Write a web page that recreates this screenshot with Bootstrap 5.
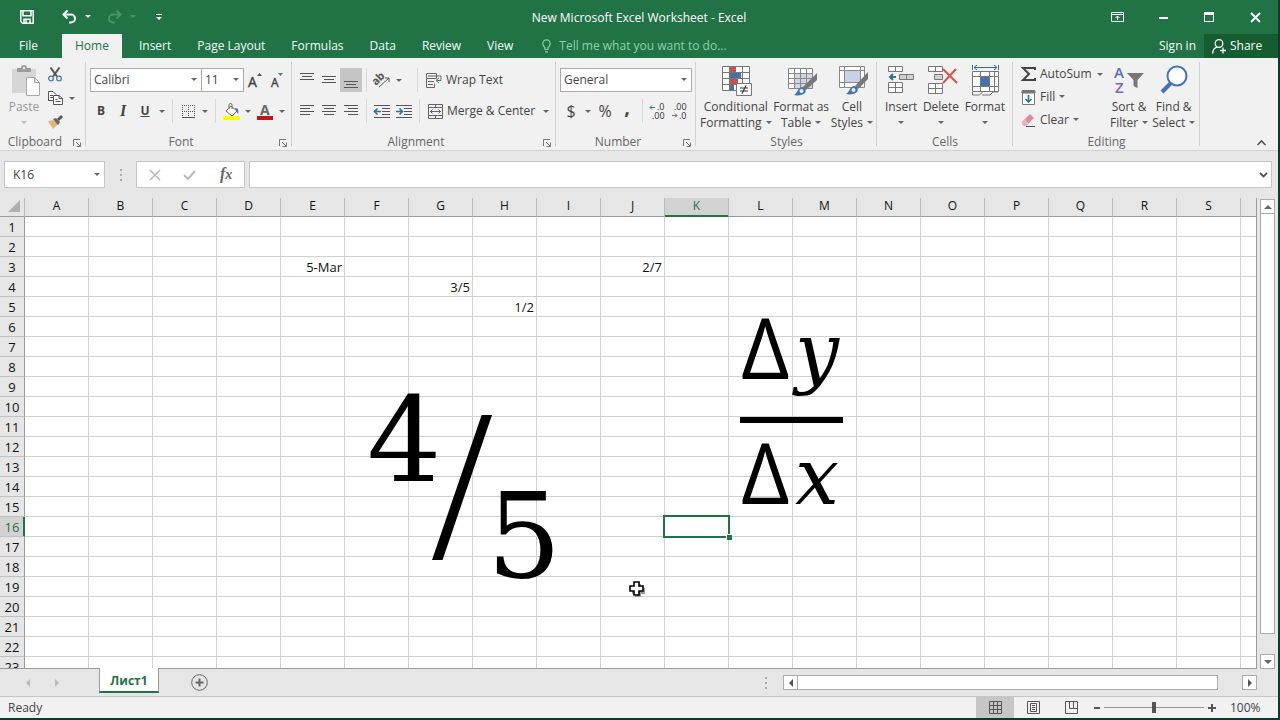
<!DOCTYPE html>
<html lang="en">
<head>
<meta charset="utf-8">
<meta name="viewport" content="width=device-width, initial-scale=1">
<title>New Microsoft Excel Worksheet - Excel</title>
<link href="https://cdn.jsdelivr.net/npm/bootstrap@5.3.0/dist/css/bootstrap.min.css" rel="stylesheet">
<style>
:root{--green:#217346;--line:#d0d0d0;--ink:#444}
body{font:12px/16px "Open Sans","Noto Sans",sans-serif;color:var(--ink);background:#e6e6e6;border-right:2px solid #0b3b2e;border-bottom:2px solid #0b3b2e}
svg{display:block;flex:none;overflow:visible}
button{border:0;background:none;padding:0;color:inherit;line-height:16px}
/* title bar */
.titlebar{background:var(--green);color:#fff;height:34px}
.titlebar h1{font-size:12px;line-height:16px;padding-top:2px}
.titlebar .side{flex:1 1 0}
.winbtn{width:46px;height:32px;display:grid;place-items:center}
/* tabs */
.tabs{background:var(--green);height:24px}
.tabs a{color:#f0fff6;text-decoration:none;padding:0 13px;line-height:23px;display:block}
.tabs a.active{background:#f1f1f1;color:var(--green)}
.tabs a.filetab{padding:0 24px 0 19px}
.tell{background:none;border:0;color:#8fd0ab;padding:0;width:180px;outline:0}
.tell::placeholder{color:#8fd0ab;opacity:1}
.share{background:#155c31;color:#fff;width:74px}
/* ribbon */
.ribbon{background:#f1f1f1;border-bottom:1px solid #d2d2d2;padding-top:4px;display:grid;grid-template-columns:86px 206px 264px 140px 181px 136px 187px 1fr}
.grp{display:grid;grid-template-rows:70px 18px;background:linear-gradient(var(--line),var(--line)) no-repeat right top/1px 84px}
.grp:last-child{background:none}
.glabel{position:relative;text-align:center;line-height:20px;color:#666}
.launch{position:absolute;right:5px;top:7px}
.two{display:grid;grid-template-rows:24px 24px;row-gap:7px;padding:6px 0 0 4px}
.tb{width:22px;height:24px;display:grid;place-items:center;flex:none}
.tb.on{background:#c5c5c5}
.dd{width:12px;height:24px;display:grid;place-items:center;flex:none}
.dd::after,.arr::after{content:"";border:3px solid transparent;border-top-color:#666;border-bottom:0}
.arr::after{display:inline-block;margin-left:4px;vertical-align:3px}
.arr.solo::after{margin-left:0}
.off .arr::after{border-top-color:#bbb}
.vsep{width:1px;height:24px;margin:0 4px;background:#d8d8d8;flex:none}
.box{border:1px solid #ababab;border-radius:0;background:#fff;color:var(--ink);height:24px;padding:0 4px 0 3px;font-size:12px;line-height:16px;appearance:none;background-image:url("data:image/svg+xml,%3Csvg xmlns='http://www.w3.org/2000/svg' width='6' height='4'%3E%3Cpath d='M0 0h6L3 3z' fill='%23666'/%3E%3C/svg%3E");background-repeat:no-repeat;background-position:right 4px center;background-size:6px 4px}
.fontbox{width:112px}
.sizebox{width:42px}
.big{display:flex;flex-direction:column;align-items:center;padding-top:3px;justify-content:flex-start;white-space:nowrap}
.big svg{margin-bottom:2px}
.off{color:#999}
.edit{width:93px}
.serif{font-family:"Liberation Serif",serif;font-style:italic;font-weight:700}
/* formula bar */
.fbar{padding:10px 6px 10px 4px;height:47px;gap:4px}
.fbox{height:27px;border:1px solid #c6c6c6;background-color:#fff}
.namebox{width:101px}
.grip{width:23px}
.fxbox{width:109px}
.fxbox .serif{font-size:16px;color:#666}
.finput{outline:0;border:0}
/* sheet */
.work{min-height:0}
.sheet{min-width:0;background:#fff;overflow:hidden;border-right:1px solid #9a9a9a;border-bottom:1px solid #9a9a9a;position:relative;color:#111}
.sheet table{table-layout:fixed;border-collapse:separate;border-spacing:0;width:1305px;font-size:13px;line-height:17px}
.sheet th,.sheet td{height:20px;padding:2px 2px 0 0;border-right:1px solid #d0d0d0;border-bottom:1px solid #d0d0d0;font-weight:400;text-align:right}
.sheet thead th{height:19px;line-height:16px;padding:0 0 2px;background:#e6e6e6;border-right-color:#bbb;border-bottom-color:#9a9a9a;text-align:center;font-size:12px}
.sheet tbody th{background:#e6e6e6;border-right-color:#9a9a9a;border-bottom-color:#c0c0c0;text-align:center;padding:2px 0 0}
.sheet thead th:first-child{border-right-color:#bbb}
.sheet thead th.sel{background:#d2d2d2;color:var(--green);border-bottom-color:var(--green);box-shadow:inset 0 -1px var(--green)}
.sheet tbody th.sel{background:#d2d2d2;color:var(--green);border-right-color:var(--green);box-shadow:inset -1px 0 var(--green)}
td.cur{position:relative}
td.cur::before{content:"";position:absolute;inset:-2px;border:2px solid var(--green)}
td.cur::after{content:"";position:absolute;right:-4px;bottom:-4px;width:6px;height:6px;background:var(--green);border:solid #fff;border-width:1px 0 0 1px}
.eq{position:absolute;color:#000;white-space:nowrap}
.num{font-family:"DejaVu Serif",serif;font-size:117px;line-height:118px}
.four{left:367px;top:184px}
.five{left:487px;top:280px}
.slash{left:432px;top:182px;font-family:"Liberation Serif",serif;font-size:216px;line-height:212px}
.frac{left:740px;top:84px;width:103px;font-size:84px}
.frac div{display:flex;justify-content:space-between;align-items:baseline;padding:0 4px 0 1px}
.frac .top{line-height:130px}
.frac .bot{line-height:98px}
.frac span{font-family:"Open Sans",sans-serif}
.frac i{font-family:"DejaVu Serif",serif;font-size:78px}
.frac hr{height:6px;margin:0;border:0;background:#000;opacity:1}
.pointer{left:629px;top:383px}
.vbar{width:21px;padding:1px 3px 0 3px}
.gap20{height:20px}
.sb{background:#fff;border:1px solid #ababab;width:15px;height:15px;display:grid;place-items:center;flex:none}
/* bottom */
.shtabs{height:28px;border-bottom:1px solid #c6c6c6}
.shtab{background:#fff;color:var(--green);font-weight:700;width:60px;height:25px;margin-top:-1px;border:solid #9a9a9a;border-width:0 1px;border-bottom:2px solid var(--green);position:relative;text-decoration:none;text-align:center;line-height:26px}
.status{background:#f1f1f1;height:21px}
.vw{width:38px;height:21px;display:grid;place-items:center}
.vw.on{background:#c6c6c6}
.zoomr{appearance:none;width:100px;height:12px;background:linear-gradient(#999,#999) center/100% 1px no-repeat;margin:0 4px}
.zoomr::-webkit-slider-thumb{appearance:none;width:4px;height:11px;background:#555}
.zval{width:62px;padding-left:14px}
.hbar{padding-right:21px}
.hthumb{width:420px}
</style>
</head>
<body class="d-flex flex-column vh-100 overflow-hidden">

<header>
<div class="titlebar d-flex align-items-center">
  <div class="side d-flex align-items-center">
    <button class="ms-3 me-4" aria-label="Save"><svg class="ms-1" width="14" height="14" viewBox="0 0 14 14" fill="none" stroke="#fff" stroke-width="1.5"><path d="M.8.8h12.4v12.4H2.5L.8 11.5zM3 .8v5h8v-5M4 13V9.2h6V13M6 10v3"/></svg></button>
    <button class="ms-1" aria-label="Undo"><svg width="15" height="14" viewBox="0 0 15 14" fill="none" stroke="#fff" stroke-width="2"><path d="M1.5 4.5H9a4 4 0 0 1 0 8H7"/><path d="M5.5.5l-4 4 4 4"/></svg></button>
    <button class="ms-2" aria-label="Undo list"><svg width="6" height="4"><path d="M0 0h6L3 3z" fill="#fff"/></svg></button>
    <button class="ms-3" aria-label="Redo"><svg width="15" height="14" viewBox="0 0 15 14" fill="none" stroke="#4d9169" stroke-width="2"><path d="M13.500 4.500H6a4 4 0 0 0 0 8h2"/><path d="M9.500.5l4 4-4 4"/></svg></button>
    <button class="ms-2" aria-label="Redo list"><svg width="6" height="4"><path d="M0 0h6L3 3z" fill="#4d9169"/></svg></button>
    <button class="ms-3 ps-1" aria-label="Customize toolbar"><svg width="6" height="7"><path d="M0 0h6v1H0zM0 3h6L3 6z" fill="#fff"/></svg></button>
  </div>
  <h1 class="m-0 fw-normal">New Microsoft Excel Worksheet - Excel</h1>
  <div class="side d-flex justify-content-end">
    <button class="winbtn" aria-label="Ribbon options"><svg width="13" height="10" viewBox="0 0 13 10" fill="none" stroke="#fff"><path d="M.5.5h12v9H.5zM.5 2.500h12M6.500 8V4M4.500 6l2-2 2 2"/></svg></button>
    <button class="winbtn" aria-label="Minimize"><svg width="9" height="10"><path d="M0 5h9v2H0z" fill="#fff"/></svg></button>
    <button class="winbtn" aria-label="Maximize"><svg width="10" height="10"><path d="M0 0h10v10H0zM1 3v6h8V3z" fill="#fff" fill-rule="evenodd"/></svg></button>
    <button class="winbtn" aria-label="Close"><svg width="9" height="9" stroke="#fff" stroke-width="2"><path d="M0 0l9 9M9 0L0 9"/></svg></button>
  </div>
</div>
<nav class="tabs d-flex">
  <a href="#" class="filetab">File</a>
  <a href="#" class="active me-1">Home</a>
  <a href="#">Insert</a><a href="#">Page Layout</a><a href="#">Formulas</a><a href="#">Data</a><a href="#">Review</a><a href="#">View</a>
  <label class="d-flex align-items-center ms-3 gap-2"><svg width="9" height="14" viewBox="0 0 9 14" fill="none" stroke="#8fd0ab" stroke-width="1.200"><path d="M3 10.500V8.500C1.500 7.500.8 6 .8 4.500a3.700 3.700 0 0 1 7.400 0C8.200 6 7.500 7.500 6 8.500v2zM3 12.800h3"/></svg><input class="tell" placeholder="Tell me what you want to do..." aria-label="Tell me what you want to do"></label>
  <a href="#" class="ms-auto ps-2 pe-2">Sign in</a>
  <button class="share d-flex align-items-center ps-2 gap-1"><svg width="14" height="15" viewBox="0 0 14 15" fill="none" stroke="#fff" stroke-width="1.300"><circle cx="7" cy="4.500" r="3.800"/><path d="M.7 14.500c0-3 1.500-5.500 4.300-6.300M11 8.500v6M8 11.500h6"/></svg>Share</button>
</nav>

<div class="ribbon">
  <section class="grp">
    <div class="d-flex">
      <button class="big off ms-2">
        <svg width="32" height="32" viewBox="0 0 32 32"><path d="M4 4h24v24H4z" fill="#d6d6d6"/><path d="M9 3h4a3 3 0 0 1 6 0h4v4H9z" fill="#9b9b9b"/><circle cx="16" cy="3" r="1.200" fill="#f1f1f1"/><path d="M18.500 12.500h8l5 5v13h-13zM26.500 12.500v5h5" fill="#fff" stroke="#aaa"/></svg>
        <span>Paste</span><span class="arr solo"></span></button>
      <div class="ms-1">
        <button class="tb" aria-label="Cut"><svg width="14" height="15" viewBox="0 0 14 15" fill="none"><path d="M2.500.5l6.500 9M11.500.5L5 9.500" stroke="#555" stroke-width="2"/><circle cx="3" cy="11.500" r="2.300" stroke="#4a78b5" stroke-width="1.300"/><circle cx="11" cy="11.500" r="2.300" stroke="#4a78b5" stroke-width="1.300"/></svg></button>
        <div class="d-flex"><button class="tb" aria-label="Copy"><svg width="15" height="14" viewBox="0 0 15 14" fill="#fff" stroke="#555"><path d="M.5.5H5l3 3v6H.5zM2 4.500h3M2 6.500h3"/><path d="M5.500 4.500H11l3.500 3v6h-9zM11 4.500v3h3.500M7.500 8.500h2M7.500 10.500h5"/></svg></button><button class="dd" aria-label="Copy options"></button></div>
        <button class="tb" aria-label="Format painter"><svg width="16" height="14" viewBox="0 0 16 14"><path d="M1 6l6-1 4 4-5 5z" fill="#e5b476"/><path d="M6 4l3-1 4 4-2 3z" fill="#666"/><path d="M10 4l4-4 2 2-4 4z" fill="#555"/></svg></button>
      </div>
    </div>
    <div class="glabel pe-3">Clipboard<svg class="launch" width="8" height="8" fill="none" stroke="#777"><path d="M.5 7V.5H7M3 3l4 4M7.500 3.500v4h-4"/></svg></div>
  </section>

  <section class="grp">
    <div class="two ps-0">
      <div class="d-flex">
        <select class="box fontbox ms-1" aria-label="Font"><option>Calibri</option></select>
        <select class="box sizebox border-start-0" aria-label="Font size"><option>11</option></select>
        <button class="tb" aria-label="Grow font"><svg width="14" height="15"><text x="0" y="14" font-size="14" stroke="#444" stroke-width=".4" fill="#444">A</text><path d="M9 3l2.500-3L14 3z" fill="#555"/></svg></button>
        <button class="tb" aria-label="Shrink font"><svg width="12" height="15"><text x="0" y="14" font-size="12" stroke="#444" stroke-width=".4" fill="#444">A</text><path d="M7 0h5l-2.500 3z" fill="#4a78b5"/></svg></button>
      </div>
      <div class="d-flex">
        <button class="tb fw-bold ms-1">B</button><button class="tb serif fs-6">I</button><button class="tb fw-bold"><u>U</u></button><button class="dd" aria-label="Underline options"></button>
        <span class="vsep"></span>
        <button class="tb" aria-label="Borders"><svg width="13" height="13" fill="none" stroke="#555"><path d="M.5 0v12M6.500 0v12M12.500 0v12M0 .5h13M0 6.500h13" stroke-dasharray="1 1"/><path d="M0 12.500h13"/></svg></button><button class="dd" aria-label="Border options"></button>
        <span class="vsep"></span>
        <button class="tb" aria-label="Fill color"><svg width="17" height="17" viewBox="0 0 17 17"><path d="M0 13h17v4H0z" fill="#ff0"/><path d="M8 3l6 5-5 5-6-5z" fill="#fff" stroke="#666"/><path d="M6 6V2a1.500 1.500 0 0 1 3 0v4" fill="none" stroke="#666"/><path d="M12 5c3 0 4 2 3 6l-2-3z" fill="#4a78b5"/></svg></button><button class="dd" aria-label="Fill options"></button>
        <button class="tb" aria-label="Font color"><svg width="16" height="17"><text x="3" y="12" font-size="14" font-weight="700" fill="#666">A</text><path d="M0 13h16v4H0z" fill="#c5161c"/></svg></button><button class="dd" aria-label="Font color options"></button>
      </div>
    </div>
    <div class="glabel pe-3">Font<svg class="launch" width="8" height="8" fill="none" stroke="#777"><path d="M.5 7V.5H7M3 3l4 4M7.500 3.500v4h-4"/></svg></div>
  </section>

  <section class="grp">
    <div class="two">
      <div class="d-flex">
        <button class="tb" aria-label="Top align"><svg width="14" height="16" stroke="#555"><path d="M0 1.500h14M2 4.500h10M0 7.500h14"/></svg></button>
        <button class="tb" aria-label="Middle align"><svg width="14" height="16" stroke="#555"><path d="M0 4.500h14M2 7.500h10M0 10.500h14"/></svg></button>
        <button class="tb on" aria-label="Bottom align"><svg width="14" height="16" stroke="#555"><path d="M0 9.500h14M2 12.500h10M0 15.500h14"/></svg></button>
        <span class="vsep"></span>
        <button class="tb" aria-label="Orientation"><svg width="16" height="15" viewBox="0 0 16 15"><text x="0" y="0" font-size="11" font-weight="700" fill="#555" transform="translate(4 11) rotate(-45) translate(-3 0)">ab</text><path d="M5 14L15 5M15 9V5h-4" fill="none" stroke="#555"/></svg></button><button class="dd me-2" aria-label="Orientation options"></button><span class="vsep ms-1"></span>
        <button class="d-flex align-items-center gap-1 ps-1"><svg width="16" height="15" viewBox="0 0 16 15" fill="none" stroke="#666"><path d="M.5.5h10v5H.5zM.5 5.500v9h8v-4M2 3h13M2 8.500h6M2 11.500h5M15 3v4.500h-4.500"/><path d="M13 5l-3 2.500 3 2.500" stroke="#4a78b5"/></svg>Wrap Text</button>
      </div>
      <div class="d-flex">
        <button class="tb" aria-label="Align left"><svg width="14" height="12" stroke="#555"><path d="M0 .5h14M0 3.500h10M0 6.500h14M0 9.500h10"/></svg></button>
        <button class="tb" aria-label="Center"><svg width="14" height="12" stroke="#555"><path d="M0 .5h14M2 3.500h10M0 6.500h14M2 9.500h10"/></svg></button>
        <button class="tb" aria-label="Align right"><svg width="14" height="12" stroke="#555"><path d="M0 .5h14M4 3.500h10M0 6.500h14M4 9.500h10"/></svg></button>
        <span class="vsep"></span>
        <button class="tb" aria-label="Decrease indent"><svg width="16" height="13" stroke="#555" fill="none"><path d="M0 .5h16M8 3.500h8M8 6.500h8M8 9.500h8M0 12.500h16"/><path d="M7 6.500H1M3.500 3.500l-3 3 3 3" stroke="#31719c" stroke-width="1.600"/></svg></button>
        <button class="tb" aria-label="Increase indent"><svg width="16" height="13" stroke="#555" fill="none"><path d="M0 .5h16M8 3.500h8M8 6.500h8M8 9.500h8M0 12.500h16"/><path d="M0 6.500h6M3.500 3.500l3 3-3 3" stroke="#31719c" stroke-width="1.600"/></svg></button>
        <span class="vsep"></span>
        <button class="d-flex align-items-center gap-1 ps-1"><svg width="15" height="15" fill="none" stroke="#666"><path d="M.5.5h14v14H.5zM.5 3.500h14M.5 11.500h14M7.500 0v3.500M7.500 11.500V15M2 7.500h11M4.500 5.500l-2 2 2 2M10.500 5.500l2 2-2 2"/></svg>Merge &amp; Center</button><button class="dd ms-auto me-1" aria-label="Merge options"></button>
      </div>
    </div>
    <div class="glabel pe-3">Alignment<svg class="launch" width="8" height="8" fill="none" stroke="#777"><path d="M.5 7V.5H7M3 3l4 4M7.500 3.500v4h-4"/></svg></div>
  </section>

  <section class="grp">
    <div class="two pe-1">
      <select class="box w-100" aria-label="Number format"><option>General</option></select>
      <div class="d-flex">
        <button class="tb fs-6" aria-label="Currency">$</button><button class="dd" aria-label="Currency options"></button><button class="tb fs-6">%</button><button class="tb fw-bold fs-5 pb-2">,</button>
        <span class="vsep"></span>
        <button class="tb" aria-label="Increase decimal"><svg width="16" height="14"><text x="7" y="6" font-size="9" fill="#333">.0</text><text x="2" y="15" font-size="9" fill="#333">.00</text><path d="M5 3.500H0M2 1.500l-2 2 2 2" fill="none" stroke="#31719c"/></svg></button>
        <button class="tb" aria-label="Decrease decimal"><svg width="16" height="14"><text x="2" y="6" font-size="9" fill="#333">.00</text><text x="7" y="15" font-size="9" fill="#333">.0</text><path d="M0 11.500h5M3 9.500l2 2-2 2" fill="none" stroke="#765fa0"/></svg></button>
      </div>
    </div>
    <div class="glabel pe-3">Number<svg class="launch" width="8" height="8" fill="none" stroke="#777"><path d="M.5 7V.5H7M3 3l4 4M7.500 3.500v4h-4"/></svg></div>
  </section>

  <section class="grp">
    <div class="d-flex justify-content-between px-1">
      <button class="big"><svg width="32" height="32" viewBox="0 0 32 32"><path d="M2.500 1.500h27v24h-27z" fill="#fff"/><path d="M10 1h6v6h-6zM10 14h8v6h-8z" fill="#c8504b"/><path d="M10 7h11v6H10zM10 20h4v6h-4z" fill="#4473a8"/><path d="M2.500 1.500h27v24h-27zM9.500 1v25M22.500 1v25M2 7.500h27M2 13.500h27M2 19.500h27" fill="none" stroke="#777"/><path d="M16.500 18.500h15v12h-15z" fill="#fff" stroke="#777"/><path d="M20 23h8M20 26h8M26 20.500l-4 8" stroke="#333" stroke-width="1.200"/></svg><span>Conditional</span><span class="arr">Formatting</span></button>
      <button class="big"><svg width="32" height="32" viewBox="0 0 32 32"><path d="M3.500 3.500h24v20h-24z" fill="#fff"/><path d="M9 9h19v15H9z" fill="#cfd6e2"/><path d="M3.500 3.500h24v20h-24zM9.500 3v21M15.500 3v21M21.500 3v21M3 8.500h25M3 13.500h25M3 18.500h25" fill="none" stroke="#888"/><path d="M32 8v7L21 25l-3-3z" fill="#777"/><path d="M17 22c3 0 5 3 3 6-2 2-7 3-11 2 4-2 3-7 8-8z" fill="#4473b4"/><circle cx="16.500" cy="26" r="2" fill="#e8eef8"/></svg><span>Format as</span><span class="arr">Table</span></button>
      <button class="big"><svg width="32" height="32" viewBox="0 0 32 32"><path d="M3.500 1.500h25v21h-25z" fill="#fff"/><path d="M9 6h15v11H9z" fill="#c9d2e3"/><path d="M3.500 1.500h25v21h-25zM8.500 1v21M24.500 1v21M3 5.500h25M3 17.500h25" fill="none" stroke="#888"/><path d="M32 7v7L22 24l-3-3z" fill="#777"/><path d="M18 21c3 0 5 3 3 6-2 2-7 3-11 2 4-2 3-7 8-8z" fill="#4473b4"/><circle cx="17.500" cy="25" r="2" fill="#e8eef8"/></svg><span>Cell</span><span class="arr">Styles</span></button>
    </div>
    <div class="glabel">Styles</div>
  </section>

  <section class="grp">
    <div class="d-flex justify-content-between ps-2 pe-2">
      <button class="big"><svg width="32" height="32" viewBox="0 0 32 32" fill="#fff" stroke="#777"><path d="M3.500 1.500h14v5h-14zM10.500 1.500v5M3.500 17.500h14v10h-14zM10.500 17.500v10M3.500 22.500h14"/><path d="M14.500 9.500h14v5h-14zM21.500 9.500v5" fill="#d0d0d0"/><path d="M11 12H5M8 9l-3 3 3 3" fill="none" stroke="#31719c" stroke-width="2"/></svg><span>Insert</span><span class="arr solo"></span></button>
      <button class="big"><svg width="32" height="32" viewBox="0 0 32 32" fill="#fff" stroke="#777"><path d="M3.500 1.500h14v5h-14zM10.500 1.500v5M3.500 18.500h14v10h-14zM10.500 18.500v10M3.500 23.500h14"/><path d="M9.500 9.500h8v5h-8z" fill="#d0d0d0"/><path d="M18 4l14 14M31 4L18 18" stroke="#d9534a" stroke-width="2"/></svg><span>Delete</span><span class="arr solo"></span></button>
      <button class="big"><svg width="32" height="32" viewBox="0 0 32 32" fill="#fff" stroke="#777"><path d="M3.500 6.500h26v20h-26z"/><path d="M12 12h8v9h-8z" fill="#4473b4" stroke="none"/><path d="M11.500 6v20M20.500 6v20M25.500 6v20M3 11.500h27M3 21.500h27" fill="none"/><path d="M3.500 27v3h7l3-3M13 30h8l3-3h5" fill="none"/><path d="M3.500 0v5M29.500 0v5M5 2.500h23M8 0L5 2.500 8 5M25 0l3 2.500L25 5" fill="none" stroke="#31719c"/></svg><span>Format</span><span class="arr solo"></span></button>
    </div>
    <div class="glabel">Cells</div>
  </section>

  <section class="grp">
    <div class="d-flex">
      <div class="edit d-grid ps-2 py-1 align-content-between">
        <div class="d-flex"><button class="d-flex gap-1 flex-fill align-items-center"><svg width="15" height="14" viewBox="0 0 15 14" fill="none" stroke="#444" stroke-width="2"><path d="M14 3V1H2l6 6-6 6h12v-2"/></svg>AutoSum</button><button class="dd h-100" aria-label="AutoSum options"></button></div>
        <button class="d-flex gap-1 align-items-center"><svg width="15" height="15" fill="#fff" stroke="#777"><path d="M1.500.5h12v14h-12z"/><path d="M1 1h13v2H1z" fill="#777"/><path d="M7.500 5v7M4.500 9l3 3 3-3" fill="none" stroke="#31719c" stroke-width="1.600"/></svg><span class="arr">Fill</span></button>
        <button class="d-flex gap-1 align-items-center"><svg width="15" height="13" viewBox="0 0 15 13"><path d="M1 8l8-8 4 4-8 8H3L1 10z" fill="#df8a9b"/><path d="M1 8l3-3 4 4-3 3H3L1 10z" fill="#e9b3bd"/><path d="M5 12.500h9" stroke="#555"/></svg><span class="arr">Clear</span></button>
      </div>
      <div class="d-flex ms-1 gap-1">
        <button class="big"><svg width="32" height="32" viewBox="0 0 32 32"><text x="1" y="13" font-size="15" font-weight="600" fill="#5b6fb0">A</text><text x="2" y="28" font-size="15" font-weight="600" fill="#8464a8">Z</text><path d="M14 8h17l-6.500 7v8l-4-2v-6z" fill="#777"/></svg><span>Sort &amp;</span><span class="arr">Filter</span></button>
        <button class="big"><svg width="32" height="32" viewBox="0 0 32 32" fill="#fff"><path d="M4 27L13 18" stroke="#4473b4" stroke-width="4"/><circle cx="19" cy="11" r="9.500" stroke="#4473b4" stroke-width="2"/></svg><span>Find &amp;</span><span class="arr">Select</span></button>
      </div>
    </div>
    <div class="glabel">Editing</div>
  </section>

  <section class="grp d-flex align-items-end justify-content-end pe-2">
    <button class="me-1 mb-1" aria-label="Collapse ribbon"><svg width="9" height="6" fill="none" stroke="#555" stroke-width="1.600"><path d="M.5 5l4-4 4 4"/></svg></button>
  </section>
</div>
</header>

<div class="fbar d-flex">
  <select class="box fbox namebox ps-2" aria-label="Name box"><option>K16</option></select>
  <div class="grip d-flex justify-content-center align-items-center"><svg width="2" height="12" fill="#aaa"><path d="M0 0h2v2H0zM0 5h2v2H0zM0 10h2v2H0z"/></svg></div>
  <div class="fbox fxbox d-flex justify-content-around align-items-center">
    <button class="tb" aria-label="Cancel"><svg width="10" height="10" stroke="#bbb" stroke-width="1.600"><path d="M0 0l10 10M10 0L0 10"/></svg></button>
    <button class="tb" aria-label="Enter"><svg width="12" height="10" fill="none" stroke="#bbb" stroke-width="2"><path d="M0 5l4 4 7-8"/></svg></button>
    <button class="tb serif" aria-label="Insert function"><span>f<small>x</small></span></button>
  </div>
  <div class="fbox d-flex flex-fill align-items-center"><input class="finput flex-fill h-100" aria-label="Formula bar"><button class="px-1" aria-label="Expand formula bar"><svg width="7" height="6" fill="none" stroke="#555" stroke-width="1.800"><path d="M0 1l3.500 3.500L7 1"/></svg></button></div>
</div>

<main class="work d-flex flex-fill">
  <div class="sheet flex-fill">
    <table id="grid"></table>
    <div class="eq num four">4</div>
    <div class="eq slash">/</div>
    <div class="eq num five">5</div>
    <div class="eq frac"><div class="top"><span>Δ</span><i>y</i></div><hr><div class="bot"><span>Δ</span><i>x</i></div></div>
    <svg class="eq pointer" width="16" height="16" viewBox="0 0 16 16"><path d="M6 3h6v4h4v6h-4v3H6v-3H3V7h3z" fill="#999"/><path d="M5 1h5v4h4v5h-4v4H5v-4H1V5h4z" fill="#fff" stroke="#000" stroke-width="1.600"/></svg>
  </div>
  <div class="vbar d-flex flex-column">
    <button class="sb" aria-label="Scroll up"><svg width="8" height="4"><path d="M0 4l4-4 4 4z" fill="#666"/></svg></button>
    <div class="sb flex-fill border-top-0"></div>
    <div class="gap20"></div>
    <button class="sb" aria-label="Scroll down"><svg width="8" height="4"><path d="M0 0h8L4 4z" fill="#666"/></svg></button>
  </div>
</main>

<footer>
  <div class="shtabs d-flex align-items-center">
    <svg class="ms-4" width="75" height="8" fill="#bbb"><path d="M6 0v8L2 4zM31 0v8l4-4z"/></svg>
    <a class="shtab align-self-start" href="#">Лист1</a>
    <button class="ms-4 ps-2" aria-label="New sheet"><svg width="17" height="17" fill="none" stroke="#666"><circle cx="8.500" cy="8.500" r="7.800"/><path d="M8.500 4.500v8M4.500 8.500h8" stroke-width="2"/></svg></button>
    <svg class="ms-auto me-3" width="2" height="12" fill="#aaa"><path d="M0 0h2v2H0zM0 5h2v2H0zM0 10h2v2H0z"/></svg>
    <div class="hbar d-flex">
      <button class="sb" aria-label="Scroll left"><svg width="4" height="8"><path d="M4 0v8L0 4z" fill="#555"/></svg></button>
      <div class="sb hthumb border-start-0"></div>
      <button class="sb ms-4" aria-label="Scroll right"><svg width="4" height="8"><path d="M0 0v8l4-4z" fill="#555"/></svg></button>
    </div>
  </div>
  <div class="status d-flex align-items-center">
    <span class="ps-2">Ready</span>
    <button class="vw on ms-auto" aria-label="Normal view"><svg width="13" height="13" fill="none" stroke="#555"><path d="M.5.5h12v12H.5zM4.500 0v13M8.500 0v13M0 4.500h13M0 8.500h13"/></svg></button>
    <button class="vw" aria-label="Page layout view"><svg width="13" height="13" fill="none" stroke="#555"><path d="M.5.5h12v12H.5zM3.500 2.500h6v8h-6zM5 4.500h3M5 6.500h3M5 8.500h3"/></svg></button>
    <button class="vw" aria-label="Page break view"><svg width="13" height="13" fill="none" stroke="#555"><path d="M.5.5h12v12H.5zM4.500 0v7.500h4V0M8.500 7.500H13"/></svg></button>
    <button class="ms-1" aria-label="Zoom out"><svg width="6" height="2"><path d="M0 0h6v2H0z" fill="#555"/></svg></button>
    <input type="range" class="zoomr" min="10" max="190" value="100" aria-label="Zoom">
    <button aria-label="Zoom in"><svg width="8" height="8" stroke="#555" stroke-width="2"><path d="M4 0v8M0 4h8"/></svg></button>
    <span class="zval">100%</span>
  </div>
</footer>

<script src="https://cdn.jsdelivr.net/npm/bootstrap@5.3.0/dist/js/bootstrap.bundle.min.js"></script>
<script>
const cols = 'ABCDEFGHIJKLMNOPQRST'.split('');
const values = {E3:'5-Mar', G4:'3/5', H5:'1/2', J3:'2/7'};
let html = '<colgroup><col style="width:25px">' + '<col style="width:64px">'.repeat(cols.length) + '</colgroup><thead><tr>'
  + '<th><svg class="ms-auto me-1" width="12" height="12"><path d="M12 0v12H0z" fill="#b0b0b0"/></svg></th>'
  + cols.map(c => `<th${c === 'K' ? ' class="sel"' : ''}>${c === 'T' ? '' : c}</th>`).join('') + '</tr></thead><tbody>';
for (let r = 1; r <= 23; r++) {
  html += `<tr><th${r === 16 ? ' class="sel"' : ''}>${r}</th>`
    + cols.map(c => `<td${c + r === 'K16' ? ' class="cur"' : ''}>${values[c + r] || ''}</td>`).join('') + '</tr>';
}
document.getElementById('grid').innerHTML = html + '</tbody>';
</script>
</body>
</html>
